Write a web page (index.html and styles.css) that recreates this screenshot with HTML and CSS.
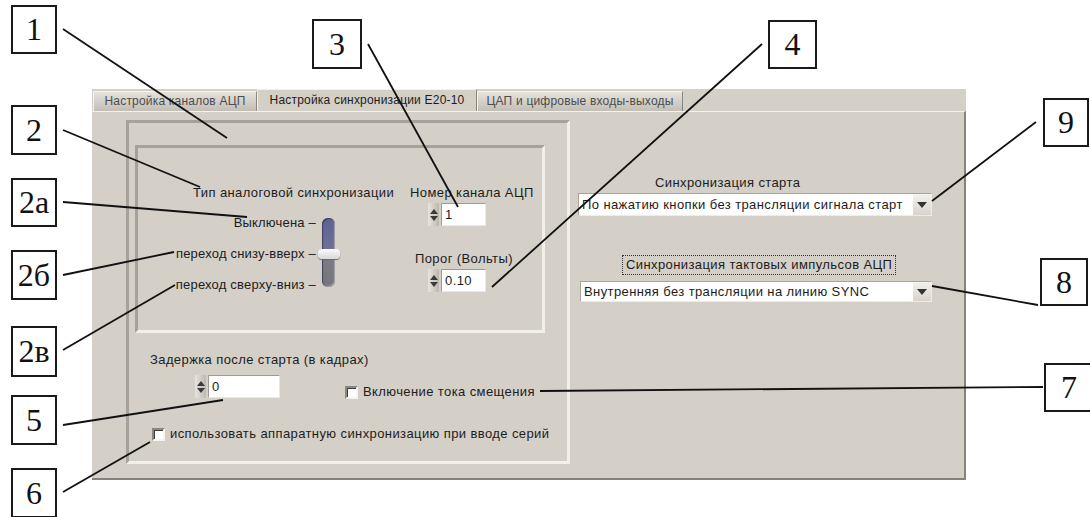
FILE: index.html
```html
<!DOCTYPE html>
<html>
<head>
<meta charset="utf-8">
<title>Настройка синхронизации E20-10</title>
<link rel="stylesheet" href="styles.css">
</head>
<body>
<div class="window">
  <div class="tabs">
    <div class="tab tab-adc">Настройка каналов АЦП</div>
    <div class="tab tab-sync active">Настройка синхронизации E20-10</div>
    <div class="tab tab-dac">ЦАП и цифровые входы-выходы</div>
  </div>
  <div class="page">
    <div class="frame outer">
      <div class="frame inner">
        <div class="sync-type">
          <div class="sync-title">Тип аналоговой синхронизации</div>
          <div class="slider-row">
            <div class="ticks">
              <span>Выключена –</span>
              <span>переход снизу-вверх –</span>
              <span>переход сверху-вниз –</span>
            </div>
            <div class="slider"><div class="thumb"></div></div>
          </div>
        </div>
        <div class="channel">
          <div class="channel-title">Номер канала АЦП</div>
          <div class="spin spin-channel"><div class="arrows"><i class="up"></i><i class="down"></i></div><div class="field">1</div></div>
          <div class="level-title">Порог (Вольты)</div>
          <div class="spin spin-level"><div class="arrows"><i class="up"></i><i class="down"></i></div><div class="field">0.10</div></div>
        </div>
      </div>
      <div class="delay-title">Задержка после старта (в кадрах)</div>
      <div class="delay-row">
        <div class="spin spin-delay"><div class="arrows"><i class="up"></i><i class="down"></i></div><div class="field">0</div></div>
        <label class="check check-bias"><span class="box"></span>Включение тока смещения</label>
      </div>
      <label class="check check-hw"><span class="box"></span>использовать аппаратную синхронизацию при вводе серий</label>
    </div>
    <div class="right">
      <div class="start-title">Синхронизация старта</div>
      <div class="combo combo-start"><span>По нажатию кнопки без трансляции сигнала старт</span><b class="drop"></b></div>
      <div class="clock-title"><span>Синхронизация тактовых импульсов АЦП</span></div>
      <div class="combo combo-clock"><span>Внутренняя без трансляции на линию SYNC</span><b class="drop"></b></div>
    </div>
  </div>
</div>

<svg class="leaders" width="1090" height="517">
  <line x1="63" y1="29" x2="227" y2="138"/>
  <line x1="63" y1="130" x2="200" y2="187"/>
  <line x1="63" y1="202" x2="247" y2="217"/>
  <line x1="63" y1="275" x2="174" y2="252"/>
  <line x1="63" y1="350" x2="175" y2="285"/>
  <line x1="63" y1="425" x2="223" y2="400"/>
  <line x1="63" y1="492" x2="150" y2="442"/>
  <line x1="368" y1="44" x2="458" y2="207"/>
  <line x1="762" y1="44" x2="492" y2="287"/>
  <line x1="1036" y1="122" x2="932" y2="201"/>
  <line x1="932" y1="286" x2="1038" y2="305"/>
  <line x1="540" y1="391" x2="1043" y2="387"/>
</svg>

<div class="callout c1">1</div>
<div class="callout c2">2</div>
<div class="callout c2a">2а</div>
<div class="callout c2b">2б</div>
<div class="callout c2v">2в</div>
<div class="callout c5">5</div>
<div class="callout c6">6</div>
<div class="callout c3">3</div>
<div class="callout c4">4</div>
<div class="callout c9">9</div>
<div class="callout c8">8</div>
<div class="callout c7">7</div>
</body>
</html>
```

FILE: styles.css
```css
body {
    margin: 0;
    width: 1090px;
    height: 517px;
    overflow: hidden;
    position: relative;
    background: #fff;
    color: #1c1c1c;
    font-family: "Liberation Sans", Arial, sans-serif;
    font-size: 13px;
    letter-spacing: 0.4px;
}

/* LabVIEW panel */
.window {
    margin: 89px 0 0 92px;
    width: 874px;
    height: 391px;
    background: #d4d0c8;
    display: flex;
    flex-direction: column;
}
.tabs {
    height: 22px;
    display: flex;
    align-items: flex-end;
    padding-left: 1px;
}
.tab {
    box-sizing: border-box;
    height: 20px;
    line-height: 18px;
    font-size: 12px;
    letter-spacing: 0.2px;
    text-align: center;
    color: #4c4c4c;
    background: linear-gradient(#e6e3dc, #c2beb6);
    border: 1px solid;
    border-color: #f4f2ee #8a867e #8a867e #f4f2ee;
    border-bottom: none;
}
.tab-adc { width: 164px; }
.tab-sync { width: 220px; }
.tab-dac { width: 206px; }
.tab.active {
    height: 22px;
    line-height: 20px;
    background: #d4d0c8;
    color: #1c1c1c;
    border-color: #f4f2ee #8a867e transparent #f4f2ee;
}
.page {
    flex: 1;
    display: flex;
    border-top: 1px solid #f4f2ee;
    border-right: 2px solid #86827a;
    border-bottom: 2px solid #86827a;
}

/* recessed frames */
.frame {
    box-sizing: border-box;
    border: 3px solid;
    border-color: #a6a29a #f2f0ea #f2f0ea #a6a29a;
}
.outer {
    margin: 8px 0 0 34px;
    width: 444px;
    height: 344px;
}
.inner {
    margin: 22px 0 0 6px;
    width: 410px;
    height: 188px;
    display: flex;
    padding-top: 37px;
}
.sync-type {
    margin-left: 35px;
    width: 224px;
}
.sync-title {
    padding-left: 20px;
    line-height: 16px;
    white-space: nowrap;
}
.slider-row {
    display: flex;
    margin-top: 14px;
}
.ticks {
    width: 143px;
    display: flex;
    flex-direction: column;
    align-items: flex-end;
    gap: 15px;
    line-height: 16px;
    letter-spacing: 0.2px;
    white-space: nowrap;
}
.slider {
    position: relative;
    margin: 3px 0 0 6px;
    width: 13px;
    height: 69px;
    border-radius: 6px;
    background: linear-gradient(#5d6296, #6e7194 45%, #7d7b82 55%, #77757c);
    box-shadow: inset 1px 1px 1px #3e4060, inset -1px -1px 1px #a4a2aa;
}
.thumb {
    position: absolute;
    left: -4px;
    top: 31px;
    width: 22px;
    height: 10px;
    border-radius: 4px;
    background: linear-gradient(#fbfbfb, #d8d8d8);
    box-shadow: 0 1px 1px #6a6a6a;
}
.channel {
    margin-left: 13px;
    width: 124px;
    display: flex;
    flex-direction: column;
    align-items: flex-start;
}
.channel-title, .level-title, .delay-title, .start-title {
    line-height: 16px;
    white-space: nowrap;
}
.spin-channel { margin: 2px 0 0 18px; }
.level-title { margin: 25px 0 0 5px; }
.spin-level { margin: 2px 0 0 18px; }

/* numeric control */
.spin {
    display: flex;
    height: 23px;
}
.arrows {
    width: 11px;
    margin-right: 2px;
    display: flex;
    flex-direction: column;
    justify-content: center;
    align-items: center;
    gap: 2px;
    background: linear-gradient(90deg, #e8e5de, #bcb8b0);
    border-top: 2px solid transparent;
    border-bottom: 2px solid transparent;
}
.arrows i {
    width: 0;
    height: 0;
    border-left: 4px solid transparent;
    border-right: 4px solid transparent;
}
.arrows .up { border-bottom: 5px solid #3a3a3a; }
.arrows .down { border-top: 5px solid #3a3a3a; }
.field {
    box-sizing: border-box;
    width: 45px;
    padding: 2px 0 0 3px;
    background: #fff;
    border: 1px solid;
    border-color: #9e9a92 #ece9e2 #ece9e2 #9e9a92;
    line-height: 17px;
}

.delay-title { margin: 19px 0 0 21px; }
.delay-row {
    display: flex;
    align-items: flex-end;
    margin: 7px 0 0 66px;
}
.spin-delay .field { width: 72px; }
.check {
    display: flex;
    align-items: center;
    line-height: 16px;
    white-space: nowrap;
}
.check .box {
    box-sizing: border-box;
    width: 13px;
    height: 13px;
    margin-right: 5px;
    background: #fff;
    border: 2px solid;
    border-color: #8a8680 #f6f4f0 #f6f4f0 #8a8680;
    box-shadow: inset 1px 1px 0 #404040;
}
.check-bias { margin-left: 65px; margin-bottom: -2px; }
.check-hw { margin: 28px 0 0 23px; }

/* right column */
.right {
    flex: 1;
    padding: 63px 0 0 8px;
}
.start-title { margin-left: 77px; }
.combo {
    box-sizing: border-box;
    display: flex;
    align-items: center;
    height: 23px;
    width: 354px;
    margin-top: 2px;
    padding-left: 3px;
    background: #fff;
    border: 1px solid;
    border-color: #a8a49c #efece6 #efece6 #a8a49c;
    white-space: nowrap;
}
.combo span { flex: 1; }
.combo .drop {
    width: 18px;
    align-self: stretch;
    display: flex;
    align-items: center;
    justify-content: center;
    background: linear-gradient(#f4f2ee, #d8d4cc);
}
.combo .drop::after {
    content: "";
    border-left: 5px solid transparent;
    border-right: 5px solid transparent;
    border-top: 6px solid #333;
}
.clock-title {
    margin: 39px 0 0 44px;
}
.clock-title span {
    display: inline-block;
    padding: 1px 3px;
    line-height: 16px;
    border: 1px dotted #333;
}
.combo-clock {
    margin: 6px 0 0 2px;
    width: 352px;
    height: 21px;
}

/* callouts over the screenshot */
.leaders {
    position: absolute;
    left: 0;
    top: 0;
}
.leaders line {
    stroke: #111;
    stroke-width: 1.8;
}
.callout {
    position: absolute;
    box-sizing: border-box;
    width: 46px;
    height: 49px;
    display: flex;
    align-items: center;
    justify-content: center;
    background: #fff;
    border: 2px solid #1a1a1a;
    font-family: "Liberation Serif", "Times New Roman", serif;
    font-size: 32px;
    letter-spacing: 0;
    color: #111;
}
.c1 { left: 11px; top: 5px; }
.c2 { left: 11px; top: 105px; height: 50px; }
.c2a { left: 11px; top: 178px; }
.c2b { left: 11px; top: 250px; height: 50px; }
.c2v { left: 11px; top: 326px; height: 51px; }
.c5 { left: 11px; top: 395px; height: 50px; }
.c6 { left: 11px; top: 468px; height: 50px; }
.c3 { left: 312px; top: 19px; width: 50px; height: 50px; }
.c4 { left: 768px; top: 20px; width: 49px; }
.c9 { left: 1043px; top: 98px; }
.c8 { left: 1040px; top: 258px; width: 48px; height: 48px; }
.c7 { left: 1044px; top: 363px; width: 50px; }
```
